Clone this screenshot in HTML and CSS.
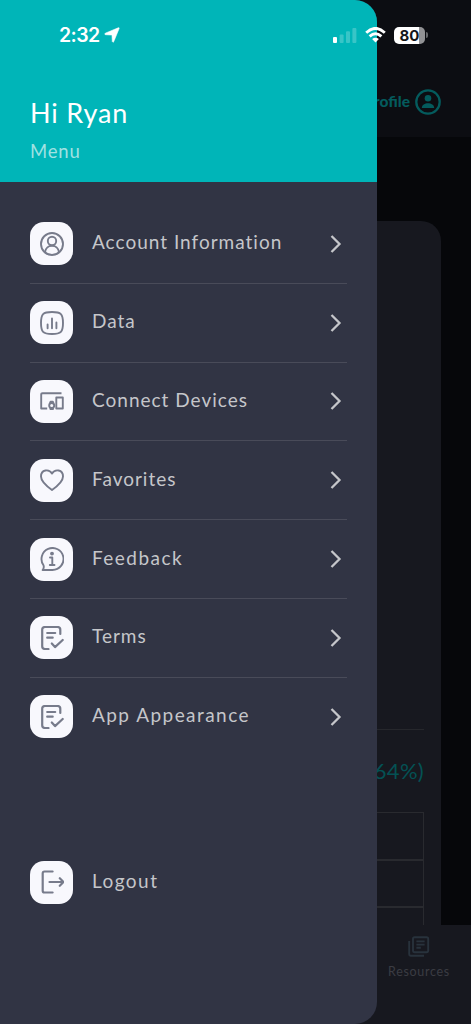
FILE: index.html
```html
<!DOCTYPE html>
<html lang="en">
<head>
<meta charset="utf-8">
<title>Menu</title>
<link rel="stylesheet" href="styles.css">
</head>
<body>
<svg class="defs" width="0" height="0">
  <symbol id="chevron" viewBox="0 0 12 20"><path d="M1.500 2l8 8-8 8" fill="none" stroke="currentColor" stroke-width="2.300"/></symbol>
  <symbol id="document" viewBox="0 0 24 24"><path d="M8.500 23H5a2.800 2.800 0 0 1-2.800-2.800V3.800A2.800 2.800 0 0 1 5 1h12.500a2.800 2.800 0 0 1 2.800 2.800V8M7.200 7h8M7.200 11.700h5.500M11.800 17.500l3.200 3.600 7.700-7.100"/></symbol>
</svg>
<div class="screen">
  <div class="app">
    <header class="app-header">
      <span class="profile">Profile</span>
      <svg class="avatar" viewBox="0 0 26 26"><circle cx="13" cy="13" r="11.700" fill="none" stroke="currentColor" stroke-width="2.300"/><circle cx="13" cy="9.200" r="3.300" fill="currentColor"/><path d="M6.800 19c0-6.400 12.400-6.400 12.400 0z" fill="currentColor"/></svg>
    </header>
    <main class="content">
      <section class="card">
        <div class="card-top"></div>
        <div class="percent">(64%)</div>
        <div class="grid"><div></div><div></div><div></div></div>
      </section>
    </main>
    <nav class="tabs">
      <div class="tab">
        <svg class="tab-icon" viewBox="0 0 22 22"><path d="M6.600 1.200h12q1.600 0 1.600 1.600v11.800q0 1.600-1.600 1.600h-12q-1.600 0-1.600-1.600V2.800q0-1.600 1.600-1.600M1.200 5v13q0 1.800 1.800 1.800h13M8.400 5.400h8.200M8.400 8.600h8.200M8.400 11.800h4.400" fill="none" stroke="currentColor" stroke-width="1.900"/></svg>
        <span>Resources</span>
      </div>
    </nav>
  </div>

  <aside class="drawer">
    <header class="drawer-header">
      <h1>Hi Ryan</h1>
      <p>Menu</p>
    </header>
    <ul class="menu">
      <li class="item"><span class="tile"><svg viewBox="0 0 24 24"><circle cx="12" cy="12" r="11"/><circle cx="12" cy="9" r="4.200"/><path d="M5 20.300c.8-8.700 13.200-8.700 14 0"/></svg></span><span class="label account">Account Information</span><svg class="chevron"><use href="#chevron"/></svg></li>
      <li class="item"><span class="tile"><svg viewBox="0 0 24 24"><path d="M12 1c9 0 11 2 11 11s-2 11-11 11S1 21 1 12 3 1 12 1zM7.600 13.500v3.800M12 7.500v9.800M16.400 11.500v5.800"/></svg></span><span class="label">Data</span><svg class="chevron"><use href="#chevron"/></svg></li>
      <li class="item"><span class="tile"><svg class="square" viewBox="0 0 24 24"><path d="M21.500 4.200H2.500Q1.200 4.200 1.200 5.500v14h6M16.300 8.500h6.500v11h-6.500zM10 14l.5-1.200h2.400l.5 1.200M10 19l.5 1h2.400l.5-1"/><circle cx="11.700" cy="16.500" r="2.500"/></svg></span><span class="label connect">Connect Devices</span><svg class="chevron"><use href="#chevron"/></svg></li>
      <li class="item"><span class="tile"><svg viewBox="0 0 24 24"><path d="M12 22C5 17 1 13 1 8.500 1 1.500 9 .5 12 5.600 15 .5 23 1.500 23 8.500 23 13 19 17 12 22z"/></svg></span><span class="label favorites">Favorites</span><svg class="chevron"><use href="#chevron"/></svg></li>
      <li class="item"><span class="tile"><svg viewBox="0 0 24 24"><path d="M3.500 18.300A11 11 0 1 1 12.500 23H2.600q1.800-2.200.9-4.700zM10 10.500h2.300V18M9.800 18h4.700"/><circle cx="12" cy="6.600" r="1" fill="currentColor"/></svg></span><span class="label wide">Feedback</span><svg class="chevron"><use href="#chevron"/></svg></li>
      <li class="item"><span class="tile"><svg class="bold"><use href="#document"/></svg></span><span class="label">Terms</span><svg class="chevron"><use href="#chevron"/></svg></li>
      <li class="item"><span class="tile"><svg class="bold"><use href="#document"/></svg></span><span class="label wide">App Appearance</span><svg class="chevron"><use href="#chevron"/></svg></li>
      <li class="item logout"><span class="tile"><svg class="bold" viewBox="0 0 24 24"><path d="M12.600 1.500H4.500Q2.700 1.500 2.700 3.300v17.400q0 1.800 1.800 1.800h8.100M9.500 12h14M19.800 8.200l3.700 3.800-3.700 3.800"/></svg></span><span class="label wide">Logout</span></li>
    </ul>
  </aside>

  <div class="status">
    <span class="time">2:32</span>
    <svg class="location" viewBox="0 0 16 16"><path d="M14.300.8Q15.500.4 15.100 1.600L9.700 14.700Q9 16 8.300 14.600L8 8.300Q8 8 7.700 8L1.300 7.700Q0 7 1.300 6.200z" fill="#fff" stroke="#fff" stroke-width=".6"/></svg>
    <div class="indicators">
      <svg width="24" height="16" viewBox="0 0 24 16" fill="#fff"><rect y="10" width="4" height="6" rx="1"/><g opacity=".22"><rect x="6.600" y="7.500" width="4" height="8.500" rx="1"/><rect x="13" y="4.200" width="4" height="11.800" rx="1"/><rect x="19.400" y="1" width="4" height="15" rx="1"/></g></svg>
      <svg class="wifi" width="21" height="16" viewBox="0 0 21 16"><path d="M1.200 5.700q9.300-8.600 18.600 0M4.600 9.300q5.900-5.300 11.800 0" fill="none" stroke="#fff" stroke-width="2.900"/><path d="M7.100 12.100q3.400-2.900 6.800 0L10.500 15.500z" fill="#fff"/></svg>
      <span class="battery">80</span><span class="battery-tip"></span>
    </div>
  </div>
</div>
</body>
</html>
```
FILE: styles.css
```css
* { box-sizing: border-box; }
body { margin: 0; background: #06070a; font-family: Lato, sans-serif; }
.defs { display: block; }
.screen { position: relative; width: 471px; height: 1024px; overflow: hidden; }
.app { display: flex; flex-direction: column; height: 1024px; background: #06070a; }
.app-header { height: 137px; padding: 89px 30px 0 0; display: flex; justify-content: flex-end; gap: 5px; background: #0c0d12; color: #045b5d; }
.profile { font-size: 15.500px; line-height: 25px; font-weight: 900; }
.avatar { width: 26px; height: 26px; }
.content { flex: 1; padding: 84px 30px 0; min-height: 0; }
.card { height: 704px; border-radius: 0 20px 0 0; background: #17181f; padding: 0 17px; }
.card-top { height: 509px; border-bottom: 1px solid #26272c; }
.percent { height: 82px; line-height: 81px; text-align: right; font-size: 22px; color: #045154; letter-spacing: .3px; }
.grid { height: 113px; border-top: 1px solid #292a2f; border-right: 1px solid #292a2f; overflow: hidden; }
.grid div { height: 47.500px; border-bottom: 2px solid #292a2f; }
.tabs { height: 99px; background: #17181f; display: flex; justify-content: flex-end; padding: 11px 21px 0 0; }
.tab { display: flex; flex-direction: column; align-items: center; gap: 6px; color: #3b3c43; font-size: 12.500px; line-height: 16px; letter-spacing: .7px; }
.tab-icon { width: 22px; height: 22px; color: #28323c; }

.drawer { position: absolute; top: 0; left: 0; width: 377px; height: 1024px; border-radius: 0 22px 22px 0; overflow: hidden; background: #313444; }
.drawer-header { height: 182px; padding: 96px 30px 0; background: #00b5b8; color: #fff; }
h1 { margin: 0; font-size: 27px; font-weight: 400; line-height: 34px; letter-spacing: .8px; }
.drawer-header p { margin: 10px 0 0; font-size: 18.500px; line-height: 22px; letter-spacing: .8px; color: #a0e1e2; }
.menu { margin: 0; padding: 23px 30px 0; list-style: none; }
.item { height: 78.800px; display: flex; align-items: center; border-bottom: 1px solid #494b59; color: #c5c6ca; }
.item:nth-child(7), .logout { border-color: transparent; }
.logout { margin-top: 87px; }
.tile { width: 43px; height: 43px; border-radius: 14px; background: #f8f8fd; display: grid; place-items: center; color: #777b8b; }
.tile svg { width: 24px; height: 24px; fill: none; stroke: currentColor; stroke-width: 1.900; stroke-linecap: round; stroke-linejoin: round; }
.tile .bold { stroke-width: 2.200; }
.tile .square { stroke-linecap: butt; stroke-width: 1.900; }
.label { flex: 1; margin-left: 19px; padding-bottom: 3px; font-size: 19px; line-height: 24px; letter-spacing: 1px; }
.wide { letter-spacing: 1.450px; }
.chevron { width: 12px; height: 20px; margin-right: 5px; }

.status { position: absolute; top: 23px; left: 59px; width: 369px; height: 24px; display: flex; align-items: center; color: #fff; font-family: Inter, sans-serif; }
.time { font-size: 19.500px; font-weight: 600; letter-spacing: -.600px; }
.location { width: 16px; height: 16px; margin-left: 4px; }
.indicators { margin-left: auto; display: flex; align-items: center; }
.wifi { margin-left: 8px; }
.battery { margin-left: 8px; width: 31px; height: 17px; border-radius: 5px; background: linear-gradient(90deg, #fff 25px, #929295 25px); color: #15161a; font-size: 15px; line-height: 17px; font-weight: 700; text-align: center; }
.battery-tip { width: 2px; height: 6px; margin-left: 1px; border-radius: 0 2px 2px 0; background: #65666a; }
```
